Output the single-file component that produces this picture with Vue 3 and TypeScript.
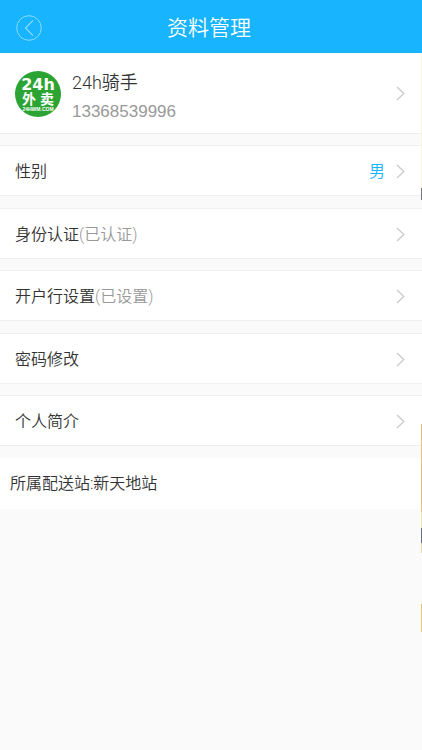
<script setup lang="ts">
interface SettingRow {
  label: string
  note?: string
  value?: string
}

const groups: SettingRow[][] = [
  [{ label: '性别', value: '男' }],
  [
    { label: '身份认证', note: '(已认证)' },
    { label: '开户行设置', note: '(已设置)' },
  ],
  [{ label: '密码修改' }, { label: '个人简介' }],
]
</script>

<template>
  <div class="page">
    <header class="bar">
      <button class="back" type="button" aria-label="返回">
        <svg viewBox="0 0 26 26" width="26" height="26" fill="none" stroke="currentColor">
          <circle cx="13" cy="13" r="12.3" />
          <path d="M17 5.3 9.5 13l7.500 7.700" stroke-width="1.200" />
        </svg>
      </button>
      <h1>资料管理</h1>
    </header>

    <main>
      <a class="profile" href="#">
        <svg class="avatar" viewBox="0 0 46 46" width="46" height="46" aria-hidden="true">
          <circle cx="23" cy="23" r="23" fill="#2ba433" />
          <text class="logo-top" x="23" y="19" text-anchor="middle">24h</text>
          <text class="logo-mid" x="14" y="33" text-anchor="middle">外</text>
          <text class="logo-mid" x="32" y="33" text-anchor="middle">卖</text>
          <text class="logo-site" x="23" y="40" text-anchor="middle">24HWM.COM</text>
        </svg>
        <span class="who">
          <span class="name">24h骑手</span>
          <span class="phone">13368539996</span>
        </span>
        <svg class="arrow" viewBox="0 0 9 15" width="9" height="15"><path d="M1 1l6.800 6.500L1 14" /></svg>
      </a>

      <nav v-for="(group, i) in groups" :key="i" class="group">
        <a v-for="row in group" :key="row.label" class="row" href="#">
          <span class="label">{{ row.label }}<span v-if="row.note" class="note">{{ row.note }}</span></span>
          <span v-if="row.value" class="value">{{ row.value }}</span>
          <svg class="arrow" viewBox="0 0 9 15" width="9" height="15"><path d="M1 1l6.800 6.500L1 14" /></svg>
        </a>
      </nav>

      <p class="station">所属配送站:新天地站</p>
    </main>
    <div class="edge" aria-hidden="true"></div>
  </div>
</template>

<style>
body {
  margin: 0;
  background: #fafafa;
}
</style>

<style scoped>
.page {
  position: relative;
  min-height: 100vh;
  background: #fafafa;
  color: #333;
  font-family: Roboto, "Noto Sans CJK SC", sans-serif;
  font-size: 16px;
  font-weight: 350;
  line-height: 24px;
}
.bar {
  display: grid;
  grid-template-columns: 48px 1fr 52px;
  align-items: center;
  box-sizing: border-box;
  height: 53px;
  padding-top: 3px;
  background: #18b4fe;
  color: #fff;
}
.back {
  display: flex;
  margin: 0 0 0 16px;
  padding: 0;
  border: 0;
  background: none;
  color: #8cdcff;
}
h1 {
  margin: 0;
  font-size: 21px;
  font-weight: 350;
  line-height: 30px;
  text-align: center;
}
a {
  color: inherit;
  text-decoration: none;
}
.profile {
  display: flex;
  align-items: center;
  box-sizing: border-box;
  height: 81px;
  margin-bottom: 11px;
  padding: 1px 17px 0 15px;
  border-bottom: 1px solid #efefef;
  background: #fff;
}
.avatar {
  margin-right: 11px;
}
.logo-top,
.logo-mid,
.logo-site {
  fill: #fff;
  font-weight: 700;
}
.logo-top {
  font-family: "DejaVu Sans", sans-serif;
  font-size: 16px;
}
.logo-mid {
  font-family: "Noto Sans CJK SC", sans-serif;
  font-size: 14px;
}
.logo-site {
  font-family: "Liberation Sans", sans-serif;
  font-size: 5px;
}
.who {
  display: flex;
  flex: 1;
  flex-direction: column;
  gap: 5px;
  padding-top: 8px;
}
.name {
  font-size: 18px;
}
.phone {
  color: #999;
  font-family: "Liberation Sans", sans-serif;
  font-size: 17px;
}
.arrow {
  flex: none;
  fill: none;
  stroke: #c8c8c8;
  stroke-width: 1.2;
}
.group {
  display: flex;
  flex-direction: column;
  gap: 11px;
  margin-bottom: 12px;
}
.row {
  display: flex;
  align-items: center;
  box-sizing: border-box;
  height: 51px;
  padding: 2px 17px 0 15px;
  border-top: 1px solid #efefef;
  border-bottom: 1px solid #efefef;
  background: #fff;
}
.label {
  flex: 1;
}
.note {
  color: #999;
}
.value {
  margin-right: 11px;
  color: #18b4fe;
}
.station {
  margin: 0;
  padding: 14px 10px 13px;
  background: #fff;
}
.edge {
  position: absolute;
  top: 0;
  right: 0;
  width: 1px;
  height: 750px;
  background: linear-gradient(
    transparent 53px, #fbf6d8 53px 188px, #77747c 188px 200px, transparent 200px 424px,
    #e6c07c 424px 512px, #f3e6a8 512px 528px, #67708a 528px 543px, #e8d8b0 543px 553px,
    transparent 553px 604px, #e6c878 604px 632px, transparent 632px
  );
}
</style>
